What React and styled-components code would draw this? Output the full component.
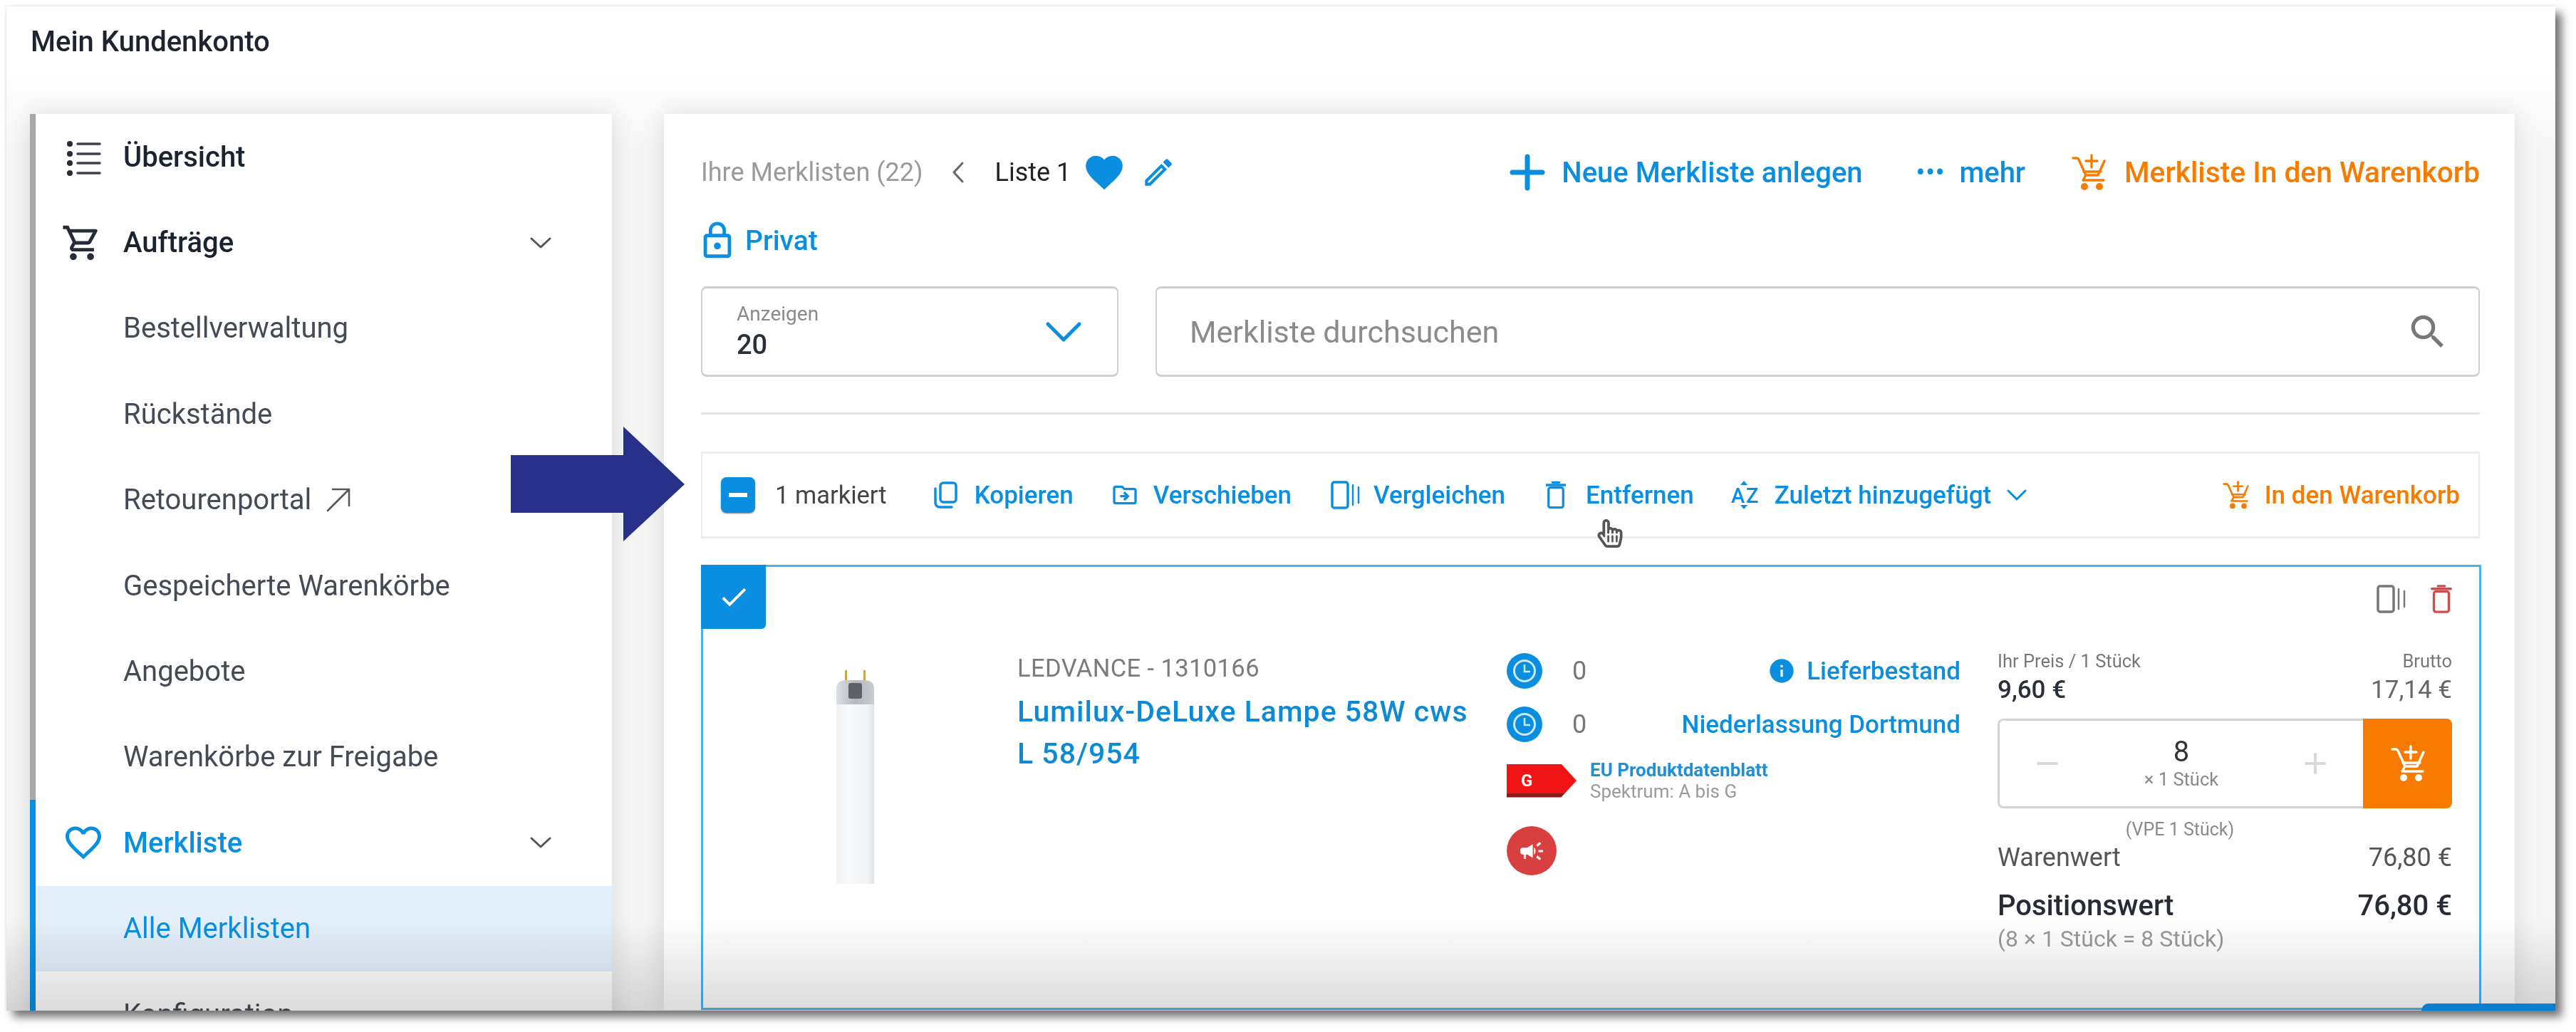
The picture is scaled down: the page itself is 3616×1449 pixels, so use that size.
import React from "react";
import styled, { createGlobalStyle } from "styled-components";
import {
  MdOutlineShoppingCart, MdFavorite, MdFavoriteBorder, MdOutlineEdit, MdOutlineLock, MdSearch, MdAdd,
  MdCheck, MdCampaign, MdRemove, MdOutlineDriveFileMove, MdInfo,
} from "react-icons/md";
import { FaRegHandPointer } from "react-icons/fa";

const BLUE = "#0a8fe0";
const ORANGE = "#f57c00";

const Global = createGlobalStyle`
  html, body { margin: 0; padding: 0; background: #fff; }
  * { box-sizing: border-box; }
  body { font-family: Roboto, "Liberation Sans", sans-serif; color: #1f2530; }
`;

const Page = styled.div`
  position: relative;
  width: 3616px;
  height: 1449px;
  padding: 9px;
  overflow: hidden;
  background: #fff;
`;
const Shell = styled.div`
  width: 3578px;
  height: 1410px;
  box-shadow: 9px 9px 12px rgba(0, 0, 0, 0.55), -1px -1px 3px rgba(0, 0, 0, 0.08);
`;
const Surface = styled.div`
  position: relative;
  width: 100%;
  height: 100%;
  overflow: hidden;
  background: linear-gradient(#fff 0, #fff 90px, #f6f6f6 200px);
  filter: blur(0.7px);
`;
const AccountTitle = styled.h1`
  margin: 0;
  height: 151px;
  padding: 30px 0 0 34px;
  font-size: 40px;
  line-height: 40px;
  font-weight: 500;
  color: #1d2430;
`;
const Columns = styled.div`
  display: flex;
  align-items: flex-start;
  gap: 73px;
  padding-left: 33px;
`;
const Sidebar = styled.nav`
  width: 817px;
  background: #fff;
  box-shadow: 0 0 34px rgba(0, 0, 0, 0.12);
  flex-shrink: 0;
`;
const NavGroup = styled.div`
  border-left: 8px solid ${(p) => p.$color};
`;
const NavRow = styled.div`
  display: flex;
  align-items: center;
  height: 120.4px;
  padding: 0 84px 0 42px;
  font-size: 40px;
  color: ${(p) => (p.$active ? BLUE : p.$head ? "#1b2230" : "#454b55")};
  font-weight: ${(p) => (p.$head ? 500 : 400)};
  background: ${(p) => (p.$selected ? "#e3effb" : "transparent")};
`;
const NavIcon = styled.span`
  display: flex;
  width: ${(p) => 81 - (p.$shift ?? 0)}px;
  flex-shrink: 0;
  align-items: center;
  margin-left: ${(p) => p.$shift ?? 0}px;
`;
const NavEnd = styled.span`
  display: flex;
  margin-left: auto;
`;
const External = styled.span`
  display: flex;
  margin-left: 20px;
`;
const Main = styled.main`
  width: 2598px;
  padding: 52px 49px 0 52px;
  background: #fff;
  box-shadow: 0 0 34px rgba(0, 0, 0, 0.12);
  flex-shrink: 0;
`;
const TopRow = styled.div`
  display: flex;
  align-items: center;
  height: 60px;
`;
const Crumb = styled.span`
  font-size: 36px;
  color: #9a9a9a;
`;
const BackWrap = styled.span`
  display: flex;
  margin-left: 40px;
`;
const Current = styled.span`
  font-size: 36px;
  color: #222;
  margin: 0 16px 0 43px;
`;
const PencilWrap = styled.span`
  display: flex;
  margin-left: 20px;
`;
const HeadActions = styled.div`
  display: flex;
  align-items: center;
  margin-left: auto;
`;
const Action = styled.span`
  display: flex;
  align-items: center;
  gap: ${(p) => p.$gap ?? 22}px;
  font-size: ${(p) => p.$size ?? 40}px;
  font-weight: 500;
  color: ${(p) => p.$color ?? BLUE};
  margin-left: ${(p) => p.$ml ?? 0}px;
  white-space: nowrap;
`;
const Dots = styled.span`
  letter-spacing: 1px;
  line-height: 20px;
  font-size: 36px;
`;
const PrivatRow = styled(TopRow)`
  margin-top: 36px;
  padding-left: 2px;
`;
const LockIcon = styled(MdOutlineLock)`
  margin-left: -8px;
`;
const Fields = styled.div`
  display: flex;
  gap: 52px;
  margin-top: 34px;
`;
const Field = styled.div`
  display: flex;
  align-items: center;
  justify-content: space-between;
  height: 127px;
  border: 2px solid #cfcfcf;
  border-top-width: 3px;
  border-bottom-width: 3px;
  border-radius: 8px;
  padding: 0 48px;
  width: ${(p) => p.$width ?? "auto"};
  flex: ${(p) => (p.$grow ? 1 : "none")};
`;
const SelectText = styled.div`
  display: flex;
  flex-direction: column;
`;
const SelectLabel = styled.span`
  font-size: 28px;
  line-height: 36px;
  color: #8a8a8a;
`;
const SelectValue = styled.span`
  font-size: 38px;
  line-height: 50px;
  font-weight: 500;
  color: #2a2f38;
`;
const Placeholder = styled.span`
  font-size: 43px;
  color: #8b8b8b;
  margin-left: -2px;
`;
const SearchIcon = styled(MdSearch)`
  margin-right: -8px;
`;
const Divider = styled.hr`
  margin: 50px 0 0;
  border: 0;
  height: 3px;
  background: #e6e6e6;
`;
const Toolbar = styled.div`
  position: relative;
  display: flex;
  align-items: center;
  height: 122px;
  margin-top: 52px;
  padding: 0 26px;
  border: 2px solid #ececec;
  border-top-width: 3px;
  border-bottom-width: 3px;
`;
const MinusBox = styled.span`
  display: flex;
  align-items: center;
  justify-content: center;
  width: 48px;
  height: 50px;
  border-radius: 8px;
  background: ${BLUE};
  box-shadow: 0 1px 2px rgba(0, 0, 0, 0.5);
  &::after {
    content: "";
    width: 26px;
    height: 6px;
    background: #fff;
  }
`;
const Marked = styled.span`
  font-size: 34.5px;
  margin: 0 65px 0 28px;
  color: #444;
`;
const ToolAction = styled(Action)`
  font-size: 35px;
  margin-right: ${(p) => p.$mr ?? 52}px;
`;
const BasketAction = styled(Action)`
  margin-left: auto;
`;
const Cursor = styled.span`
  position: absolute;
  left: 1254px;
  top: 92px;
  display: flex;
  color: #555;
  z-index: 2;
`;
const Card = styled.section`
  position: relative;
  display: flex;
  align-items: flex-start;
  height: 625px;
  margin: 37px -2px 0 0;
  border: 3px solid #4db2ec;
`;
const CheckTab = styled.span`
  position: absolute;
  top: -3px;
  left: -3px;
  display: flex;
  align-items: center;
  justify-content: center;
  width: 91px;
  height: 90px;
  background: ${BLUE};
  border-bottom-right-radius: 6px;
  color: #fff;
`;
const ImageCol = styled.div`
  display: flex;
  justify-content: center;
  width: 441px;
  padding-top: 145px;
  padding-right: 14px;
`;
const InfoCol = styled.div`
  width: 687px;
  padding: 120px 48px 0 0;
`;
const Brand = styled.div`
  font-size: 34.5px;
  line-height: 44px;
  letter-spacing: 0.4px;
  color: #7b7b7b;
`;
const ProductTitle = styled.div`
  margin-top: 10px;
  font-size: 41px;
  line-height: 59px;
  font-weight: 500;
  letter-spacing: 1px;
  color: #0d8ad6;
`;
const StockCol = styled.div`
  width: 637px;
  padding-top: 120px;
  flex-shrink: 0;
`;
const StockRow = styled.div`
  display: flex;
  align-items: center;
  height: 52px;
  margin-bottom: 23px;
`;
const StockCount = styled.span`
  font-size: 36px;
  color: #777;
  margin-left: 42px;
`;
const StockLabel = styled(Action)`
  margin-left: auto;
  font-size: 35px;
  gap: 15px;
`;
const EnergyRow = styled.div`
  display: flex;
  align-items: center;
  gap: 19px;
  margin-top: 14px;
  height: 60px;
`;
const EnergyTag = styled.span`
  display: flex;
  align-items: center;
  width: 98px;
  height: 47px;
  padding-left: 20px;
  font-size: 24px;
  font-weight: 700;
  color: #fff;
  background: linear-gradient(#f01414 88%, #8f1a1a 88%);
  clip-path: polygon(0 0, 78% 0, 100% 50%, 78% 100%, 0 100%);
`;
const EnergyText = styled.div`
  display: flex;
  flex-direction: column;
  font-size: 26px;
  line-height: 30px;
`;
const EnergyLink = styled.span`
  font-weight: 700;
  color: #1f8fd6;
`;
const EnergySub = styled.span`
  color: #9a9a9a;
`;
const PromoBadge = styled.span`
  display: flex;
  align-items: center;
  justify-content: center;
  width: 70px;
  height: 69px;
  margin-top: 34px;
  border-radius: 50%;
  background: #d84040;
  color: #fff;
`;
const PriceCol = styled.div`
  width: 638px;
  margin-left: 52px;
  padding-top: 25px;
  flex-shrink: 0;
`;
const ItemIcons = styled.div`
  display: flex;
  justify-content: flex-end;
  gap: 34px;
  height: 40px;
`;
const Between = styled.div`
  display: flex;
  justify-content: space-between;
  align-items: baseline;
  margin-top: ${(p) => p.$mt ?? 0}px;
  font-size: ${(p) => p.$size}px;
  line-height: ${(p) => p.$lh}px;
  color: ${(p) => p.$color ?? "#555"};
  font-weight: ${(p) => p.$weight ?? 400};
`;
const StrongPrice = styled.span`
  font-weight: 500;
  font-size: 35px;
  color: #2a2f38;
`;
const QtyBox = styled.div`
  display: flex;
  height: 126px;
  margin-top: 18px;
`;
const Stepper = styled.div`
  display: flex;
  flex: 1;
  align-items: center;
  justify-content: space-between;
  padding: 0 42px;
  border: 3px solid #d4d4d4;
  border-right: 0;
  border-radius: 8px 0 0 8px;
  color: #d8d8d8;
`;
const QtyValue = styled.div`
  display: flex;
  flex-direction: column;
  align-items: center;
`;
const QtyNumber = styled.span`
  font-size: 40px;
  line-height: 44px;
  color: #333;
`;
const QtyUnit = styled.span`
  font-size: 25.5px;
  line-height: 32px;
  color: #888;
`;
const CartButton = styled.span`
  display: flex;
  align-items: center;
  justify-content: center;
  width: 125px;
  background: #f87b00;
  border-radius: 0 8px 8px 0;
  color: #fff;
`;
const Vpe = styled.div`
  margin-top: 13px;
  padding-right: 126px;
  font-size: 25px;
  line-height: 34px;
  color: #8a8a8a;
  text-align: center;
`;
const CalcNote = styled.div`
  margin-top: 1px;
  font-size: 32px;
  line-height: 40px;
  color: #999;
`;
const Scrim = styled.div`
  position: absolute;
  left: 0;
  right: 0;
  bottom: 0;
  height: 130px;
  background: linear-gradient(rgba(0, 0, 0, 0), rgba(0, 0, 0, 0.14));
  pointer-events: none;
`;
const Bump = styled.div`
  position: absolute;
  right: 0;
  bottom: 0;
  width: 188px;
  height: 10px;
  border-radius: 24px 0 0 0;
  background: #0a7fd0;
`;
const BigArrow = styled.svg`
  position: absolute;
  left: 717px;
  top: 599px;
`;

const Stroke = ({ w, h, children, color = "currentColor", sw = 3, vb }) => (
  <svg width={w} height={h} viewBox={vb ?? `0 0 ${w} ${h}`} fill="none" stroke={color} strokeWidth={sw} strokeLinecap="round" strokeLinejoin="round">
    {children}
  </svg>
);
const ListIcon = () => (
  <Stroke w={50} h={54} color="#3a404c" sw={3.5}>
    <path d="M17 9h31M17 23h31M17 36h31M17 50h31" />
    <g fill="#262c38" stroke="none">
      <circle cx="6" cy="9" r="4" /><circle cx="6" cy="23" r="4" /><circle cx="6" cy="36" r="4" /><circle cx="6" cy="50" r="4" />
    </g>
  </Stroke>
);
const Chevron = ({ w = 32, h = 18, color = "#555", sw = 3 }) => (
  <Stroke w={w} h={h} color={color} sw={sw}>
    <path d={`M${sw} ${sw}L${w / 2} ${h - sw}L${w - sw} ${sw}`} />
  </Stroke>
);
const OutArrow = () => (
  <Stroke w={36} h={36} color="#555" sw={2.5}>
    <path d="M3 33L33 3M10 3h23v23" />
  </Stroke>
);
const BackChevron = () => (
  <Stroke w={18} h={32} color="#666" sw={3}>
    <path d="M15 3L3 16L15 29" />
  </Stroke>
);
const PlusIcon = () => (
  <Stroke w={50} h={52} color={BLUE} sw={7}>
    <path d="M25 4v44M4 26h42" />
  </Stroke>
);
const CartPlus = ({ w = 48, h = 52, color = "currentColor" }) => (
  <Stroke w={w} h={h} vb="0 0 48 52" color={color} sw={3.4}>
    <path d="M2 6h5q2 0 3 2l10 22h17L46 10" />
    <path d="M20 30l-4 7h29M17 25h24" />
    <path d="M28 2v17M20 10h16" />
    <g fill={color} stroke="none">
      <circle cx="18" cy="46" r="5" />
      <circle cx="39" cy="46" r="5" />
    </g>
  </Stroke>
);
const CopyIcon = () => (
  <Stroke w={34} h={38} color={BLUE} sw={3.5}>
    <rect x="10" y="2" width="22" height="27" rx="4" />
    <path d="M3 10v20a6 6 0 0 0 6 6h17" />
  </Stroke>
);
const CompareIcon = ({ color = BLUE }) => (
  <Stroke w={42} h={40} color={color} sw={3.5}>
    <rect x="2" y="2" width="22" height="36" rx="3" />
    <path d="M31 6v28M39 9v22" strokeWidth="2.5" />
  </Stroke>
);
const TrashIcon = ({ color = BLUE, w = 28, h = 40 }) => (
  <Stroke w={w} h={h} color={color} sw={3.5} vb="0 0 30 42">
    <rect x="4" y="10" width="22" height="30" rx="3" />
    <path d="M1 6h28M10 2h10" />
  </Stroke>
);
const SortIcon = () => (
  <svg width="40" height="40" viewBox="0 0 40 40" fontFamily="Roboto, sans-serif" fontSize="29" fontWeight="500" fill={BLUE}>
    <text x="0" y="31">A</text>
    <text x="21" y="31">Z</text>
    <path d="M18 0l5 6h-10zM18 40l5-6h-10z" />
  </svg>
);
const ClockIcon = () => (
  <svg width="50" height="52" viewBox="0 0 50 52">
    <circle cx="25" cy="26" r="25" fill={BLUE} />
    <circle cx="25" cy="26" r="14.5" fill="none" stroke="#cfe9fb" strokeWidth="3" />
    <path d="M25 17v10h8" fill="none" stroke="#cfe9fb" strokeWidth="2.5" />
  </svg>
);
const Lamp = () => (
  <svg width="53" height="300" viewBox="0 0 53 300">
    <defs>
      <linearGradient id="tube" x1="0" x2="1" y1="0" y2="0">
        <stop offset="0" stopColor="#eef0f2" />
        <stop offset="0.3" stopColor="#fafbfc" />
        <stop offset="0.8" stopColor="#f2f4f6" />
        <stop offset="1" stopColor="#dfe3e7" />
      </linearGradient>
      <linearGradient id="cap" x1="0" x2="1" y1="0" y2="0">
        <stop offset="0" stopColor="#dcdfe2" />
        <stop offset="0.5" stopColor="#b5b9be" />
        <stop offset="1" stopColor="#c9ccd0" />
      </linearGradient>
    </defs>
    <rect x="12" y="0" width="3" height="16" fill="#c9a648" />
    <rect x="38" y="0" width="3" height="16" fill="#c9a648" />
    <rect x="0" y="44" width="53" height="256" fill="url(#tube)" />
    <path d="M0 48V26Q0 14 14 14H39Q53 14 53 26V48Z" fill="url(#cap)" />
    <rect x="17" y="18" width="19" height="22" rx="3" fill="#5d6268" />
  </svg>
);

const navItems = ["Bestellverwaltung", "Rückstände"];
const navItems2 = ["Gespeicherte Warenkörbe", "Angebote", "Warenkörbe zur Freigabe"];

export default function App() {
  return (
    <Page>
      <Global />
      <Shell>
        <Surface>
          <AccountTitle>Mein Kundenkonto</AccountTitle>
          <Columns>
            <Sidebar>
              <NavGroup $color="#a8a8a8">
                <NavRow $head><NavIcon><ListIcon /></NavIcon>Übersicht</NavRow>
                <NavRow $head>
                  <NavIcon $shift={-6}><MdOutlineShoppingCart size={58} color="#262c38" /></NavIcon>Aufträge
                  <NavEnd><Chevron /></NavEnd>
                </NavRow>
                {navItems.map((t) => (<NavRow key={t}><NavIcon />{t}</NavRow>))}
                <NavRow><NavIcon />Retourenportal<External><OutArrow /></External></NavRow>
                {navItems2.map((t) => (<NavRow key={t}><NavIcon />{t}</NavRow>))}
              </NavGroup>
              <NavGroup $color={BLUE}>
                <NavRow $head $active>
                  <NavIcon $shift={-5}><MdFavoriteBorder size={60} color={BLUE} /></NavIcon>Merkliste
                  <NavEnd><Chevron /></NavEnd>
                </NavRow>
                <NavRow $selected $active><NavIcon />Alle Merklisten</NavRow>
                <NavRow><NavIcon />Konfiguration</NavRow>
              </NavGroup>
            </Sidebar>

            <Main>
              <TopRow>
                <Crumb>Ihre Merklisten (22)</Crumb>
                <BackWrap><BackChevron /></BackWrap>
                <Current>Liste 1</Current>
                <MdFavorite size={62} color={BLUE} />
                <PencilWrap><MdOutlineEdit size={50} color={BLUE} /></PencilWrap>
                <HeadActions>
                  <Action $gap={23}><PlusIcon />Neue Merkliste anlegen</Action>
                  <Action $ml={75} $gap={20}><Dots>•••</Dots>mehr</Action>
                  <Action $ml={65} $color={ORANGE} $gap={26} $size={40.7}><CartPlus />Merkliste In den Warenkorb</Action>
                </HeadActions>
              </TopRow>
              <PrivatRow>
                <Action $size={39} $gap={10}><LockIcon size={58} />Privat</Action>
              </PrivatRow>
              <Fields>
                <Field $width="586px">
                  <SelectText>
                    <SelectLabel>Anzeigen</SelectLabel>
                    <SelectValue>20</SelectValue>
                  </SelectText>
                  <Chevron w={54} h={32} color={BLUE} sw={5} />
                </Field>
                <Field $grow>
                  <Placeholder>Merkliste durchsuchen</Placeholder>
                  <SearchIcon size={62} color="#777" />
                </Field>
              </Fields>
              <Divider />
              <Toolbar>
                <MinusBox />
                <Marked>1 markiert</Marked>
                <ToolAction $gap={24}><CopyIcon />Kopieren</ToolAction>
                <ToolAction $gap={20} $mr={55}><MdOutlineDriveFileMove size={40} />Verschieben</ToolAction>
                <ToolAction $gap={18} $mr={57}><CompareIcon />Vergleichen</ToolAction>
                <ToolAction $gap={28}><TrashIcon />Entfernen</ToolAction>
                <ToolAction $gap={21} $mr={0}><SortIcon />Zuletzt hinzugefügt<Chevron w={30} h={18} color={BLUE} sw={3} /></ToolAction>
                <BasketAction $size={35} $gap={22} $color={ORANGE}>
                  <CartPlus w={37} h={40} />In den Warenkorb
                </BasketAction>
                <Cursor><FaRegHandPointer size={40} /></Cursor>
              </Toolbar>
              <Card>
                <CheckTab><MdCheck size={46} /></CheckTab>
                <ImageCol><Lamp /></ImageCol>
                <InfoCol>
                  <Brand>LEDVANCE - 1310166</Brand>
                  <ProductTitle>Lumilux-DeLuxe Lampe 58W cws L 58/954</ProductTitle>
                </InfoCol>
                <StockCol>
                  <StockRow>
                    <ClockIcon /><StockCount>0</StockCount>
                    <StockLabel><MdInfo size={40} />Lieferbestand</StockLabel>
                  </StockRow>
                  <StockRow>
                    <ClockIcon /><StockCount>0</StockCount>
                    <StockLabel>Niederlassung Dortmund</StockLabel>
                  </StockRow>
                  <EnergyRow>
                    <EnergyTag>G</EnergyTag>
                    <EnergyText>
                      <EnergyLink>EU Produktdatenblatt</EnergyLink>
                      <EnergySub>Spektrum: A bis G</EnergySub>
                    </EnergyText>
                  </EnergyRow>
                  <PromoBadge><MdCampaign size={38} /></PromoBadge>
                </StockCol>
                <PriceCol>
                  <ItemIcons>
                    <CompareIcon color="#777" />
                    <TrashIcon color="#d94848" w={30} />
                  </ItemIcons>
                  <Between $mt={50} $size={25.5} $lh={34} $color="#777">
                    <span>Ihr Preis / 1 Stück</span><span>Brutto</span>
                  </Between>
                  <Between $mt={2} $size={35} $lh={44} $color="#666">
                    <StrongPrice>9,60 €</StrongPrice><span>17,14 €</span>
                  </Between>
                  <QtyBox>
                    <Stepper>
                      <MdRemove size={50} />
                      <QtyValue>
                        <QtyNumber>8</QtyNumber>
                        <QtyUnit>× 1 Stück</QtyUnit>
                      </QtyValue>
                      <MdAdd size={50} />
                    </Stepper>
                    <CartButton><CartPlus w={50} h={52} /></CartButton>
                  </QtyBox>
                  <Vpe>(VPE 1 Stück)</Vpe>
                  <Between $size={36} $lh={44}><span>Warenwert</span><span>76,80 €</span></Between>
                  <Between $mt={21} $size={40} $lh={50} $color="#262b35" $weight={500}>
                    <span>Positionswert</span><span>76,80 €</span>
                  </Between>
                  <CalcNote>(8 × 1 Stück = 8 Stück)</CalcNote>
                </PriceCol>
              </Card>
            </Main>
          </Columns>
          <Scrim />
          <Bump />
        </Surface>
      </Shell>
      <BigArrow width="244" height="161" viewBox="0 0 244 161">
        <polygon points="0,40 158,40 158,0 244,81 158,161 158,121 0,121" fill="#28318a" />
      </BigArrow>
    </Page>
  );
}
